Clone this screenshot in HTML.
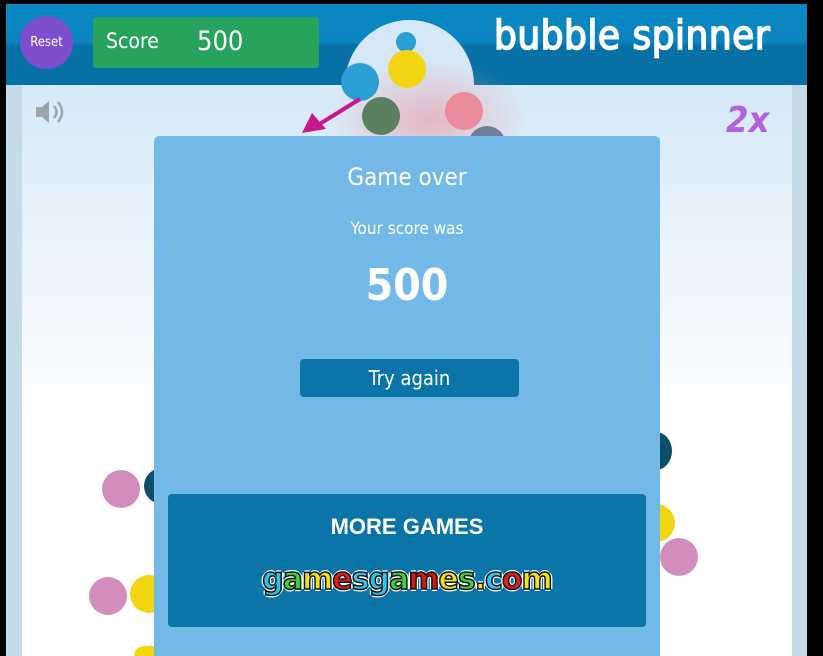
<!DOCTYPE html><html style="width:823px;height:656px;overflow:hidden"><head><style>
*{margin:0;padding:0;box-sizing:border-box}
body{width:823px;height:656px;background:#000;position:relative;overflow:hidden;font-family:"DejaVu Sans Condensed","DejaVu Sans","Liberation Sans",sans-serif}
.abs{position:absolute}
.b{position:absolute;border-radius:50%}
</style></head><body>
<div class="abs" style="left:6px;top:4px;width:801px;height:652px;background:#c5dbe8"></div>
<div class="abs" style="left:22px;top:84px;width:770px;height:572px;background:linear-gradient(#d5e9f8 0,#eef6fc 200px,#fff 330px)"></div>
<div class="abs" style="left:6px;top:4px;width:801px;height:81px;background:linear-gradient(#0a88c3 0,#0a84bf 38px,#0771a6 42px,#0771a6 81px)"></div>
<!-- dome -->
<div class="b" style="left:345px;top:20px;width:129px;height:129px;background:#d6e8f7"></div>
<div class="b" style="left:330px;top:60px;width:200px;height:120px;background:radial-gradient(closest-side,rgba(240,150,160,.6),rgba(240,160,170,0))"></div>
<div class="b" style="left:396px;top:32px;width:20px;height:20px;background:#2a9fd6"></div>
<div class="b" style="left:388px;top:50px;width:38px;height:38px;background:#f2d513"></div>
<div class="b" style="left:341px;top:63px;width:38px;height:38px;background:#2a9fd6"></div>
<div class="b" style="left:362px;top:97px;width:38px;height:38px;background:#5c7f60"></div>
<div class="b" style="left:445px;top:92px;width:38px;height:38px;background:#e88b9a"></div>
<div class="b" style="left:468px;top:126px;width:38px;height:38px;background:#6d7f9a"></div>
<svg class="abs" style="left:298px;top:95px" width="70" height="45"><line x1="62" y1="4" x2="20" y2="30" stroke="#c8168e" stroke-width="4"/><polygon points="4,38 14,18 28,34" fill="#c8168e"/></svg>
<!-- header items -->
<div class="b" style="left:20px;top:16px;width:53px;height:53px;background:#7d4fcf;color:#fff;font-size:13px;line-height:53px;text-align:center">Reset</div>
<div class="abs" style="left:93px;top:17px;width:226px;height:51px;background:#27a35d;border-radius:3px;color:#fff"><span class="abs" style="left:13px;top:12px;font-size:21px">Score</span><span class="abs" style="left:104px;top:9px;font-size:27px">500</span></div>
<div class="abs" style="left:494px;top:13px;color:#fff;font-size:40px;letter-spacing:0.5px;-webkit-text-stroke:1.5px #fff;font-family:'DejaVu Sans Condensed','DejaVu Sans',sans-serif">bubble&nbsp;spinner</div>
<svg class="abs" style="left:34px;top:98px" width="40" height="28"><polygon points="2,9 8,9 15,3 15,25 8,19 2,19" fill="#9aa5ae"/><path d="M20 8 Q25 14 20 20 M24 4 Q32 14 24 24" stroke="#9aa5ae" stroke-width="2.5" fill="none"/></svg>
<div class="abs" style="left:726px;top:100px;color:#b45ee0;font-size:36px;font-weight:bold;font-style:italic">2x</div>
<!-- side bubbles -->
<div class="b" style="left:144px;top:468px;width:36px;height:36px;background:#0c4d6a"></div>
<div class="b" style="left:102px;top:470px;width:38px;height:38px;background:#d38dbc"></div>
<div class="b" style="left:130px;top:575px;width:38px;height:38px;background:#f2d513"></div>
<div class="b" style="left:89px;top:577px;width:38px;height:38px;background:#d38dbc"></div>
<div class="b" style="left:134px;top:646px;width:38px;height:10px;border-radius:19px 19px 0 0;background:#f2d513"></div>
<div class="b" style="left:640px;top:432px;width:32px;height:38px;background:#0c4d6a"></div>
<div class="b" style="left:637px;top:504px;width:38px;height:38px;background:#f2d513"></div>
<div class="b" style="left:660px;top:538px;width:38px;height:38px;background:#d38dbc"></div>
<!-- modal -->
<div class="abs" style="left:154px;top:136px;width:506px;height:520px;background:#73b9e8;border-radius:5px 5px 0 0;color:#fff;text-align:center">
 <div class="abs" style="left:0;right:0;top:27px;font-size:24px">Game over</div>
 <div class="abs" style="left:0;right:0;top:83px;font-size:17px">Your score was</div>
 <div class="abs" style="left:0;right:0;top:124px;font-size:44px;font-weight:bold">500</div>
 <div class="abs" style="left:146px;top:223px;width:219px;height:38px;background:#0b75a8;border-radius:4px;font-size:20px;line-height:38px">Try again</div>
 <div class="abs" style="left:14px;top:358px;width:478px;height:133px;background:#0b75a8;border-radius:4px">
  <div style="margin-top:20px;font-family:'Liberation Sans',sans-serif;font-weight:bold;font-size:22px">MORE GAMES</div>
  <div style="margin-top:22px;font-family:'DejaVu Sans',sans-serif;font-weight:bold;font-size:30px;letter-spacing:-1px;-webkit-text-stroke:1.5px #111;text-shadow:2px 0 0 #fff,-2px 0 0 #fff,0 2px 0 #fff,0 -2px 0 #fff"><span style="color:#2ac3f0">g</span><span style="color:#3ad23a">a</span><span style="color:#f0e020">m</span><span style="color:#e02020">e</span><span style="color:#30c8f0">s</span><span style="color:#2ac3f0">g</span><span style="color:#3ad23a">a</span><span style="color:#d01818">m</span><span style="color:#f0e020">e</span><span style="color:#3ad23a">s</span><span style="color:#f0e020">.</span><span style="color:#30c8f0">c</span><span style="color:#e02020">o</span><span style="color:#f0e020">m</span></div>
 </div>
</div>
</body></html>
